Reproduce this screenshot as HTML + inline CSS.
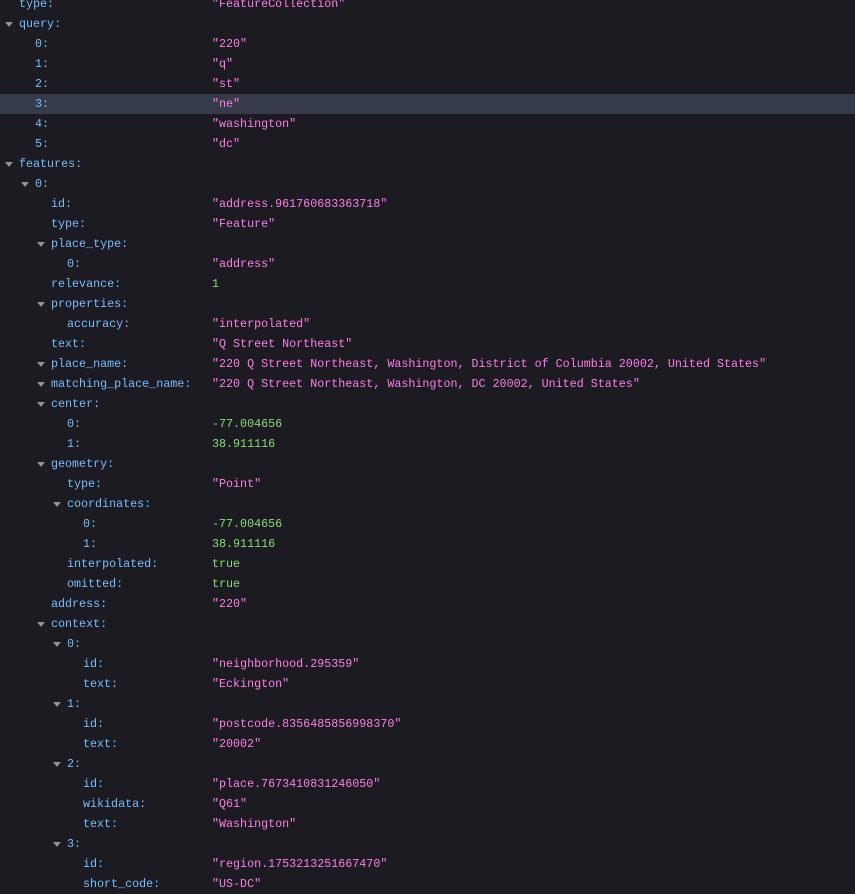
<!DOCTYPE html>
<html><head><meta charset="utf-8"><style>
body{margin:0;background:#1c1b22;width:855px;height:888px;overflow:hidden;font-family:"Liberation Mono",monospace;font-size:11.7px;}
#w{position:absolute;top:-6px;left:0;width:855px;}
.r{position:relative;height:20px;line-height:20px;white-space:pre;}
.r.h{background:#353b48;}
.k{position:absolute;color:#75bfff;}
.v{position:absolute;left:212px;}
.s{color:#ff7de9}.n{color:#86de74}
.t{position:absolute;top:8px;width:0;height:0;border-left:4.5px solid transparent;border-right:4.5px solid transparent;border-top:5px solid #939395;}
</style></head><body><div id="w">
<script>
const rows=[
[0,"type","\"FeatureCollection\"","s"],
[0,"query",null,null,1],
[1,"0","\"220\"","s"],[1,"1","\"q\"","s"],[1,"2","\"st\"","s"],[1,"3","\"ne\"","s",0,1],[1,"4","\"washington\"","s"],[1,"5","\"dc\"","s"],
[0,"features",null,null,1],
[1,"0",null,null,1],
[2,"id","\"address.961760683363718\"","s"],
[2,"type","\"Feature\"","s"],
[2,"place_type",null,null,1],
[3,"0","\"address\"","s"],
[2,"relevance","1","n"],
[2,"properties",null,null,1],
[3,"accuracy","\"interpolated\"","s"],
[2,"text","\"Q Street Northeast\"","s"],
[2,"place_name","\"220 Q Street Northeast, Washington, District of Columbia 20002, United States\"","s",1],
[2,"matching_place_name","\"220 Q Street Northeast, Washington, DC 20002, United States\"","s",1],
[2,"center",null,null,1],
[3,"0","-77.004656","n"],[3,"1","38.911116","n"],
[2,"geometry",null,null,1],
[3,"type","\"Point\"","s"],
[3,"coordinates",null,null,1],
[4,"0","-77.004656","n"],[4,"1","38.911116","n"],
[3,"interpolated","true","n"],[3,"omitted","true","n"],
[2,"address","\"220\"","s"],
[2,"context",null,null,1],
[3,"0",null,null,1],
[4,"id","\"neighborhood.295359\"","s"],[4,"text","\"Eckington\"","s"],
[3,"1",null,null,1],
[4,"id","\"postcode.8356485856998370\"","s"],[4,"text","\"20002\"","s"],
[3,"2",null,null,1],
[4,"id","\"place.7673410831246050\"","s"],[4,"wikidata","\"Q61\"","s"],[4,"text","\"Washington\"","s"],
[3,"3",null,null,1],
[4,"id","\"region.1753213251667470\"","s"],[4,"short_code","\"US-DC\"","s"]
];
let h="";
for(const [l,k,v,c,tw,hl] of rows){
 const x=19+16*l;
 h+=`<div class="r${hl?' h':''}">`+(tw?`<span class="t" style="left:${x-14}px"></span>`:"")+`<span class="k" style="left:${x}px">${k}:</span>`+(v!==null?`<span class="v ${c}">${v}</span>`:"")+"</div>";
}
document.getElementById("w").innerHTML=h;
</script>
</div></body></html>
